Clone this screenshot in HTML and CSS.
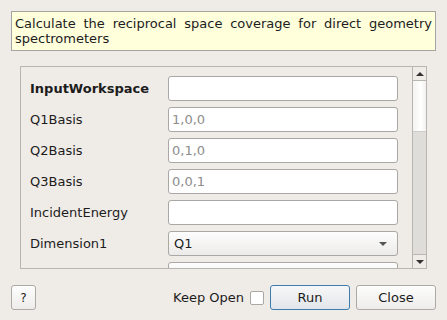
FILE: index.html
```html
<!DOCTYPE html>
<html lang="en">
  <head>
    <meta charset="UTF-8" />
    <title>Algorithm dialog</title>
    <link rel="stylesheet" href="styles.css">
  </head>
  <body>
    <div class="dialog">

      <div class="description">
        Calculate the reciprocal space coverage for direct geometry spectrometers
      </div>

      <!-- property list -->
      <div class="frame">
        <div class="props">
          <label class="name bold">InputWorkspace</label>
          <div class="field"></div>

          <label class="name">Q1Basis</label>
          <div class="field hint">1,0,0</div>

          <label class="name">Q2Basis</label>
          <div class="field hint">0,1,0</div>

          <label class="name">Q3Basis</label>
          <div class="field hint">0,0,1</div>

          <label class="name">IncidentEnergy</label>
          <div class="field"></div>

          <label class="name">Dimension1</label>
          <div class="field combo">Q1<span class="caret"></span></div>

          <!-- next row, scrolled out of view -->
          <label class="name"></label>
          <div class="field combo"></div>
        </div>
        <div class="scrollbar">
          <div class="sb-btn"><span class="up"></span></div>
          <div class="sb-handle"></div>
          <div class="sb-track"></div>
          <div class="sb-btn sb-bottom"><span class="down"></span></div>
        </div>
      </div>

      <div class="buttons">
        <button class="btn small">?</button>
        <div class="spacer"></div>
        <span class="keep">Keep Open</span>
        <span class="check"></span>
        <button class="btn default">Run</button>
        <button class="btn">Close</button>
      </div>

    </div>
  </body>
</html>
```

FILE: styles.css
```css
*{
    padding: 0px;
    margin: 0px;
    box-sizing: border-box;
}
body{
    background-color: #efebe7;
    font-family: "DejaVu Sans", sans-serif;
    font-size: 13px;
    color: #1c1c1c;
    width: 447px;
    height: 320px;
    overflow: hidden;
}
.dialog{
    padding-top: 11px;
}
.description{
    margin: 0 11px;
    height: 40px;
    padding: 4px 3px 0 3px;
    line-height: 15px;
    background-color: #ffffdc;
    border: 1px solid #a4a4a4;
    text-align: justify;
}

/* property list */
.frame{
    margin: 15px 20px 0 20px;
    height: 203px;
    border: 1px solid #b9b5b1;
    display: flex;
}
.props{
    flex: 1;
    overflow: hidden;
    padding: 9px 0 0 9px;
    display: grid;
    grid-template-columns: 138px 230px;
    grid-auto-rows: 25px;
    row-gap: 6px;
    align-content: start;
}
.name{
    display: flex;
    align-items: center;
}
.bold{
    font-weight: bold;
}
.field{
    background-color: #ffffff;
    border: 1px solid #aaa7a4;
    border-radius: 3px;
    padding-left: 3px;
    display: flex;
    align-items: center;
}
.hint{
    color: #8d8d8d;
}
.combo{
    padding-left: 5px;
    justify-content: space-between;
    background: linear-gradient(#fdfdfd, #ecebe9);
}
.caret{
    width: 0;
    height: 0;
    margin-right: 10px;
    border-left: 4px solid transparent;
    border-right: 4px solid transparent;
    border-top: 4px solid #555555;
}

/* scrollbar */
.scrollbar{
    width: 14px;
    border-left: 1px solid #b9b5b1;
    display: flex;
    flex-direction: column;
}
.sb-btn{
    height: 14px;
    border-bottom: 1px solid #b9b5b1;
    display: flex;
    align-items: center;
    justify-content: center;
}
.sb-bottom{
    border-bottom: none;
    border-top: 1px solid #b9b5b1;
}
.up{
    width: 0;
    height: 0;
    border-left: 4px solid transparent;
    border-right: 4px solid transparent;
    border-bottom: 4px solid #333333;
}
.down{
    width: 0;
    height: 0;
    border-left: 4px solid transparent;
    border-right: 4px solid transparent;
    border-top: 4px solid #333333;
}
.sb-handle{
    height: 51px;
    background: linear-gradient(90deg, #f4f3f2, #ffffff 60%, #f2f1f0);
    border-bottom: 1px solid #cfccc9;
}
.sb-track{
    flex: 1;
    background-color: #dfddda;
}

/* bottom row */
.buttons{
    margin: 16px 11px 0 11px;
    height: 25px;
    display: flex;
    align-items: center;
}
.spacer{
    flex: 1;
}
.btn{
    font-family: "DejaVu Sans", sans-serif;
    font-size: 13px;
    color: #1c1c1c;
    width: 80px;
    height: 25px;
    margin-left: 6px;
    border: 1px solid #aeaaa6;
    border-radius: 3px;
    background: linear-gradient(#fdfdfd, #eeecea);
}
.small{
    width: 25px;
    margin-left: 0;
    font-size: 12px;
}
.default{
    border-color: #3d7cad;
    background: linear-gradient(#f6f7f8, #e2e6ea);
}
.keep{
    margin-right: 6px;
}
.check{
    width: 14px;
    height: 14px;
    background-color: #ffffff;
    border: 1px solid #aaa7a4;
    border-radius: 2px;
}
```
